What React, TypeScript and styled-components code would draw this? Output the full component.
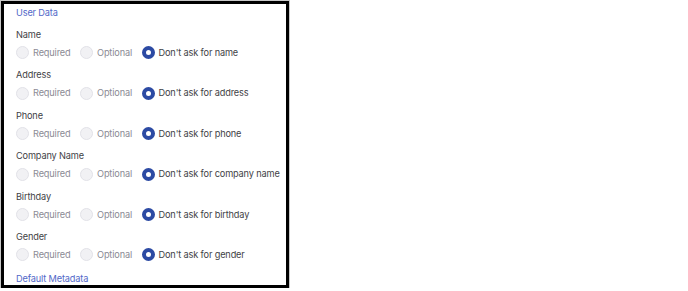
import React from 'react';
import styled, { createGlobalStyle } from 'styled-components';

type Field = {
  label: string;
  noun: string;
};

const fields: Field[] = [
  { label: 'Name', noun: 'name' },
  { label: 'Address', noun: 'address' },
  { label: 'Phone', noun: 'phone' },
  { label: 'Company Name', noun: 'company name' },
  { label: 'Birthday', noun: 'birthday' },
  { label: 'Gender', noun: 'gender' },
];

const App: React.FC = () => {
  const [values, setValues] = React.useState<Record<string, string>>(() => {
    const init: Record<string, string> = {};
    fields.forEach(f => {
      init[f.noun] = 'none';
    });
    return init;
  });

  const choose = (noun: string, value: string): void => {
    setValues(prev => ({ ...prev, [noun]: value }));
  };

  return (
    <>
      <GlobalStyle />
      <Panel>
        <SectionTitle>User Data</SectionTitle>
        {fields.map(field => (
          <Group key={field.noun}>
            <FieldLabel>{field.label}</FieldLabel>
            <OptionRow>
              <Option onClick={() => choose(field.noun, 'required')}>
                <Dot checked={values[field.noun] === 'required'} />
                <OptionText checked={values[field.noun] === 'required'}>Required</OptionText>
              </Option>
              <Option onClick={() => choose(field.noun, 'optional')}>
                <Dot checked={values[field.noun] === 'optional'} />
                <OptionText checked={values[field.noun] === 'optional'}>Optional</OptionText>
              </Option>
              <Option onClick={() => choose(field.noun, 'none')}>
                <Dot checked={values[field.noun] === 'none'} />
                <OptionText checked={values[field.noun] === 'none'}>
                  Don&apos;t ask for {field.noun}
                </OptionText>
              </Option>
            </OptionRow>
          </Group>
        ))}
        <SectionTitle last>Default Metadata</SectionTitle>
      </Panel>
    </>
  );
};

const GlobalStyle = createGlobalStyle`
  body {
    margin: 0;
    background: #ffffff;
    font-family: Inter, "Noto Sans", sans-serif;
  }
`;

const Panel = styled.div`
  box-sizing: border-box;
  width: 288px;
  height: 287px;
  margin: 1px 0 0 1px;
  border: 3px solid #000000;
  box-shadow: 0 0 0 1px #c8c8c8;
  padding: 1px 0 0 12px;
  overflow: hidden;
  display: flex;
  flex-direction: column;
  gap: 4.4px;
  white-space: nowrap;
  letter-spacing: -0.15px;
`;

const SectionTitle = styled.div<{ last?: boolean }>`
  font-size: 9.2px;
  line-height: 16px;
  color: #5268c8;
  margin: ${p => (p.last ? '1.5px 0 0' : '0 0 1.6px')};
`;

const Group = styled.div`
  display: flex;
  flex-direction: column;
`;

const FieldLabel = styled.div`
  font-size: 9.2px;
  line-height: 16px;
  color: #3f3f46;
`;

const OptionRow = styled.div`
  display: flex;
  align-items: center;
  gap: 9.5px;
  height: 20px;
`;

const Option = styled.label`
  display: flex;
  align-items: center;
  gap: 4px;
  cursor: pointer;
`;

const Dot = styled.span<{ checked: boolean }>`
  box-sizing: border-box;
  width: 13px;
  height: 13px;
  border-radius: 50%;
  background: ${p => (p.checked ? '#ffffff' : '#f1f1f4')};
  border: ${p => (p.checked ? '4px solid #2c4aa3' : '1px solid #e2e2e8')};
`;

const OptionText = styled.span<{ checked: boolean }>`
  font-size: 9.2px;
  line-height: 16px;
  color: ${p => (p.checked ? '#3f3f46' : '#8a8a94')};
`;

export default App;
